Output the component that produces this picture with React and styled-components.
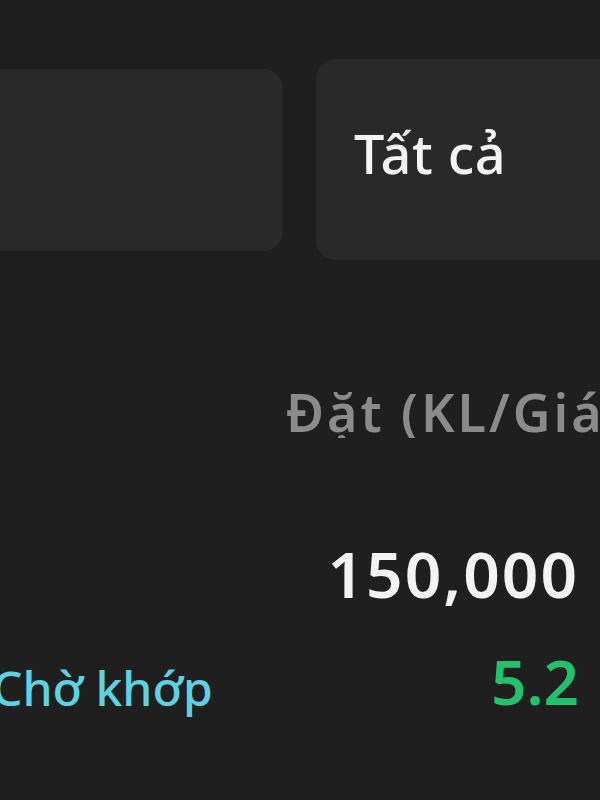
import React from 'react';
import styled, { createGlobalStyle } from 'styled-components';

const GlobalStyle = createGlobalStyle`
  html, body {
    margin: 0;
    padding: 0;
    background: #1f1f1f;
    overflow: hidden;
  }
  body {
    font-family: "Noto Sans", "Open Sans", sans-serif;
  }
`;

const Screen = styled.div`
  width: 600px;
  height: 800px;
  overflow: hidden;
  background: #1f1f1f;
  display: flex;
  flex-direction: column;
`;

const FilterRow = styled.div`
  display: flex;
  align-items: center;
  gap: 33px;
  margin-left: -40px;
  padding-top: 59px;
  width: 720px;
`;

const FilterCard = styled.div`
  flex: 0 0 auto;
  width: ${p => p.$width}px;
  height: ${p => p.$height}px;
  background: #292929;
  border-radius: 20px;
  display: flex;
  align-items: center;
  padding: 0 0 ${p => (p.$label ? 14 : 0)}px ${p => (p.$label ? 38 : 0)}px;
  box-sizing: border-box;
  color: #f4f4f4;
  font-size: 54px;
  font-weight: 500;
  letter-spacing: 0.5px;
  white-space: nowrap;
`;

const ColumnHeader = styled.div`
  margin-top: 126px;
  padding-left: 286px;
  color: #8b8b8b;
  font-size: 52px;
  font-weight: 600;
  letter-spacing: 3px;
  line-height: 1;
  white-space: nowrap;
  overflow: hidden;
`;

const OrderRow = styled.div`
  display: grid;
  grid-template-columns: 1fr auto;
  grid-template-rows: auto auto;
  row-gap: 44px;
  margin-top: 104px;
  margin-left: -8px;
  padding-right: 21px;
  align-items: end;
`;

const Status = styled.div`
  grid-column: 1;
  grid-row: 2;
  color: ${p => p.$color};
  font-size: 48px;
  font-weight: 500;
  line-height: 1;
  white-space: nowrap;
`;

const Value = styled.div`
  grid-column: 2;
  grid-row: ${p => p.$row};
  justify-self: end;
  color: ${p => p.$color};
  font-size: ${p => p.$size}px;
  font-weight: 600;
  letter-spacing: ${p => p.$spacing || 0}px;
  line-height: 1;
`;

export default function App() {
  return (
    <>
      <GlobalStyle />
      <Screen>
        <FilterRow>
          <FilterCard $width={323} $height={182} />
          <FilterCard $width={320} $height={201} $label>Tất cả</FilterCard>
        </FilterRow>
        <ColumnHeader>Đặt (KL/Giá)</ColumnHeader>
        <OrderRow>
          <Value $row={1} $size={64} $spacing={2} $color="#f3f3f3">150,000</Value>
          <Status $color="#5dd2e2">Chờ khớp</Status>
          <Value $row={2} $size={62} $color="#22c16b">5.2</Value>
        </OrderRow>
      </Screen>
    </>
  );
}
